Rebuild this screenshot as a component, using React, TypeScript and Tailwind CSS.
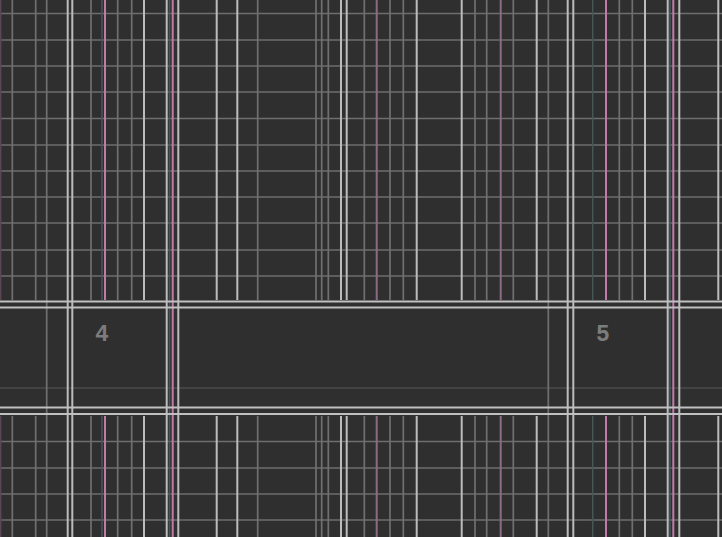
type Kind = 'light' | 'gray' | 'pink' | 'muted' | 'teal' | 'faint'

const stroke: Record<Kind, { c: string; w: number }> = {
  light: { c: '#bcbcbc', w: 2 },
  gray: { c: '#707070', w: 1.7 },
  pink: { c: '#c27ba9', w: 2 },
  muted: { c: '#8e6b84', w: 2 },
  teal: { c: '#44585a', w: 1.5 },
  faint: { c: '#5a4654', w: 1.5 },
}

// column guides, repeating every ~500px
const cols: [number, Kind][] = [
  [0.7, 'faint'], [12.3, 'gray'], [35.7, 'gray'], [46.7, 'gray'], [67.7, 'light'], [72.3, 'light'],
  [91, 'gray'], [102, 'teal'], [105, 'pink'], [117.7, 'gray'], [131.7, 'gray'], [144, 'light'],
  [166.7, 'light'], [169.5, 'teal'], [172.7, 'pink'], [178.3, 'light'], [216.7, 'light'], [237.3, 'light'],
  [257.7, 'gray'], [316, 'gray'], [321.7, 'gray'], [328.3, 'gray'], [341, 'light'], [346.7, 'light'],
  [364.3, 'gray'], [376.7, 'muted'], [390, 'gray'], [403.3, 'gray'], [416.7, 'light'], [461.7, 'light'],
  [475, 'gray'], [486.7, 'gray'], [500.7, 'muted'], [513.3, 'gray'], [536.7, 'light'], [548.3, 'gray'],
  [567.7, 'light'], [573.3, 'light'], [592.7, 'teal'], [606, 'pink'], [619.3, 'gray'], [632.3, 'gray'],
  [645, 'light'], [667.7, 'light'], [670, 'teal'], [673.3, 'pink'], [679.3, 'light'], [718.3, 'light'],
]

// only the gutters cross the row band
const bandCols: [number, Kind][] = [
  [46.7, 'gray'], [67.7, 'light'], [72.3, 'light'], [166.7, 'light'], [169.5, 'teal'], [172.7, 'pink'],
  [178.3, 'light'], [548.3, 'gray'], [567.7, 'light'], [573.3, 'light'], [667.7, 'light'], [670, 'teal'],
  [673.3, 'pink'], [679.3, 'light'],
]

function Guides({ height, rows }: { height: number; rows: number[] }) {
  return (
    <svg width="722" height={height} className="block shrink-0">
      {rows.map((y) => (
        <line key={'r' + y} x1="0" x2="722" y1={y} y2={y} stroke="#6e6e6e" strokeWidth="1.7" />
      ))}
      {cols.map(([x, k]) => (
        <line key={x} x1={x} x2={x} y1="0" y2={height} stroke={stroke[k].c} strokeWidth={stroke[k].w} />
      ))}
    </svg>
  )
}

function Band() {
  return (
    <div className="relative h-[116px] shrink-0">
      <svg width="722" height="116" className="absolute inset-0">
        <line x1="0" x2="722" y1="88" y2="88" stroke="#585858" strokeWidth="1" />
        {bandCols.map(([x, k]) => (
          <line key={x} x1={x} x2={x} y1="0" y2="116" stroke={stroke[k].c} strokeWidth={stroke[k].w} />
        ))}
        {[1.6, 7.6, 107.6, 114].map((y) => (
          <line key={y} x1="0" x2="722" y1={y} y2={y} stroke="#c0c0c0" strokeWidth="2" />
        ))}
      </svg>
      <div className="relative grid grid-cols-[72px_95px_406px_95px_1fr] h-full font-['Liberation_Mono',monospace] text-[23px] leading-none font-bold text-[#7c7c7c]">
        <div />
        <div className="pl-[23px] pt-[24px]">4</div>
        <div />
        <div className="pl-[23px] pt-[24px]">5</div>
        <div />
      </div>
    </div>
  )
}

export default function App() {
  return (
    <div className="w-[722px] h-[537px] overflow-hidden bg-[#2f2f2f] flex flex-col">
      <Guides height={300} rows={[13.5, 40, 66, 92, 118.5, 145, 171, 197, 223, 250, 276]} />
      <Band />
      <Guides height={121} rows={[25.5, 52, 78, 104]} />
    </div>
  )
}
